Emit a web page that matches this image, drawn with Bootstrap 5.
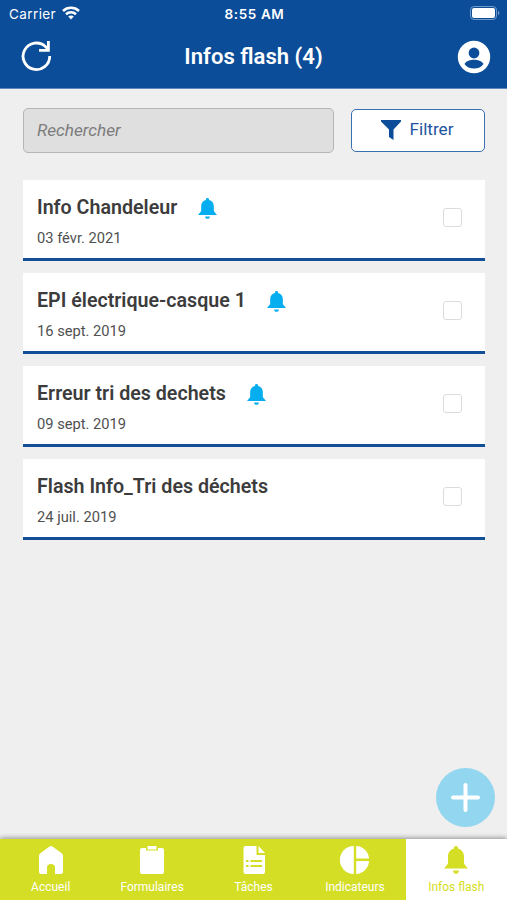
<!DOCTYPE html>
<html lang="fr">
<head>
<meta charset="utf-8">
<meta name="viewport" content="width=device-width, initial-scale=1">
<title>Infos flash</title>
<link href="https://cdn.jsdelivr.net/npm/bootstrap@5.3.0/dist/css/bootstrap.min.css" rel="stylesheet">
<style>
  body { font-family: Roboto, sans-serif; background: #efefef; color: #3c3c3c; height: 900px; overflow: hidden; }
  svg { display: block; flex: none; }
  .app-header { background: #0b4d99; height: 89px; border-bottom: 1px solid #5f8abb; }
  .status-bar { height: 28px; padding: 0 7px 0 9px; font: 13.500px/28px Inter, sans-serif; }
  .status-bar .carrier { letter-spacing: .4px; }
  .status-bar .wifi { margin-left: 6px; margin-top: -2px; }
  .status-bar .battery { margin-top: -2px; }
  .status-bar .clock { font-weight: 600; letter-spacing: .6px; }
  .status-bar .side, .title-bar .side { flex: 1 1 0; }
  .title-bar { height: 58px; padding: 0 16px 0 20px; }
  .title-bar h1 { font-size: 22.100px; font-weight: 600; line-height: 28px; margin: -2px 0 0 -4px; }
  .search-row { padding: 19px 22px 0 23px; gap: 17px; }
  .search-box { height: 45px; background: #dfdfdf; border: 1px solid #b5b5b5; border-radius: 5px; font-size: 17.200px; font-style: italic; padding: 0 13px 2px; }
  .search-box:focus { background: #dfdfdf; }
  .search-box::placeholder { color: #7c7c7c; }
  .filter-btn { width: 134px; height: 43px; background: #fff; border: 1.5px solid #3a70b0; border-radius: 5px; color: #1e559f; font-size: 17.200px; line-height: 20px; padding: 0 1px 1px 0; gap: 8px; }
  .filter-btn span { margin-top: -2px; }
  .flash-list { padding: 27px 22px 0 23px; gap: 12px; }
  .flash-item { height: 81px; border-bottom: 3px solid #134f97; padding: 0 23px 3px 14px; }
  .flash-text { padding-top: 9px; }
  .flash-item h2 { font-size: 19.650px; font-weight: 600; line-height: 24px; }
  .flash-item h2 + svg { margin-left: 21px; margin-top: 1px; }
  .flash-date { font-size: 14.700px; line-height: 20px; margin-top: 8px; color: #505050; }
  .flash-item .form-check-input { width: 19px; height: 19px; border: 1.5px solid #dcdcdc; border-radius: 3px; margin: 0; }
  .add-btn { width: 59px; height: 59px; background: #92d6f0; margin: 0 12px 12px 0; }
  .tab-bar { height: 61px; background: #d4de24; box-shadow: 0 -1px 5px rgba(0,0,0,.4); }
  .tab-bar .nav-link { color: #fff; font-size: 12px; line-height: 14px; padding: 6px 0 0; gap: 5px; border-radius: 0; }
  .tab-bar .nav-link.active { background: #fff; color: #d4de24; }
</style>
</head>
<body class="d-flex flex-column">
<svg width="0" height="0" class="position-absolute">
  <symbol id="bell" viewBox="0 0 24 28" preserveAspectRatio="none"><path d="M12 0c1.200 0 2 .8 2 2v.6c3.800 1 6 4.100 6 8v6.200c0 1.700 1.800 3 4 5.700H0c2.200-2.700 4-4 4-5.700v-6.200c0-3.900 2.200-7 6-8V2c0-1.200.8-2 2-2zM9 24.500h6c0 2-1.300 3.300-3 3.300s-3-1.300-3-3.300z" fill="currentColor"/></symbol>
</svg>

<header class="app-header text-white flex-shrink-0">
  <div class="status-bar d-flex">
    <div class="side d-flex align-items-center"><span class="carrier">Carrier</span>
      <svg class="wifi" width="18" height="14" viewBox="0 0 18 14" fill="none" stroke="#fff" stroke-width="2.500"><path d="M1 5C5.500.8 12.500.8 17 5M4 8.200c2.800-2.500 7.200-2.500 10 0"/><path d="M6.200 10.500c1.600-1.300 4-1.300 5.600 0L9 13.500z" fill="#fff" stroke="none"/></svg>
    </div>
    <span class="clock">8:55 AM</span>
    <div class="side d-flex align-items-center justify-content-end">
      <svg class="battery" width="30" height="14" viewBox="0 0 30 14"><rect x=".5" y=".5" width="26" height="13" rx="3.500" fill="none" stroke="#7199c9"/><rect x="2" y="2" width="23" height="10" rx="2" fill="#fff"/><path d="M28 4.500q3 2.500 0 5z" fill="#7199c9"/></svg>
    </div>
  </div>
  <div class="title-bar d-flex align-items-center">
    <div class="side"><svg width="32" height="34" viewBox="0 0 32 34" fill="none" stroke="#fff" stroke-width="2.800"><path d="M29.700 16A13.300 13.300 0 1 1 25.600 6.700L28.500 9.500"/><path d="M28.400 1v9.400H19"/></svg></div>
    <h1>Infos flash (4)</h1>
    <div class="side d-flex justify-content-end">
      <svg width="34" height="34" viewBox="0 0 34 34"><circle cx="17" cy="17" r="16.200" fill="#fff"/><circle cx="17" cy="13" r="5.400" fill="#0b4d99"/><path d="M7.500 24c1.500-3 6.200-4.200 9.500-4.200s8 1.200 9.500 4.200c-2 3-5.500 4.500-9.500 4.500S9.500 27 7.500 24z" fill="#0b4d99"/></svg>
    </div>
  </div>
</header>

<main class="flex-grow-1 d-flex flex-column">
  <div class="search-row d-flex align-items-center">
    <input class="form-control search-box" type="text" placeholder="Rechercher" aria-label="Rechercher">
    <button class="btn filter-btn flex-shrink-0 d-flex align-items-center justify-content-center" type="button">
      <svg width="20" height="20" viewBox="0 0 20 20"><path d="M0 0h20v1.500L12.500 9.500V20L8 17V9.500L0 1.500z" fill="#0b4d99"/></svg>
      <span>Filtrer</span>
    </button>
  </div>

  <div class="flash-list d-flex flex-column">
    <article class="flash-item bg-white d-flex align-items-center justify-content-between">
      <div class="flash-text"><div class="d-flex align-items-center"><h2 class="mb-0">Info Chandeleur</h2><svg width="19" height="21" color="#06aeef"><use href="#bell"/></svg></div><div class="flash-date">03 févr. 2021</div></div>
      <input class="form-check-input" type="checkbox" aria-label="Info Chandeleur">
    </article>
    <article class="flash-item bg-white d-flex align-items-center justify-content-between">
      <div class="flash-text"><div class="d-flex align-items-center"><h2 class="mb-0">EPI électrique-casque 1</h2><svg width="19" height="21" color="#06aeef"><use href="#bell"/></svg></div><div class="flash-date">16 sept. 2019</div></div>
      <input class="form-check-input" type="checkbox" aria-label="EPI électrique-casque 1">
    </article>
    <article class="flash-item bg-white d-flex align-items-center justify-content-between">
      <div class="flash-text"><div class="d-flex align-items-center"><h2 class="mb-0">Erreur tri des dechets</h2><svg width="19" height="21" color="#06aeef"><use href="#bell"/></svg></div><div class="flash-date">09 sept. 2019</div></div>
      <input class="form-check-input" type="checkbox" aria-label="Erreur tri des dechets">
    </article>
    <article class="flash-item bg-white d-flex align-items-center justify-content-between">
      <div class="flash-text"><div class="d-flex align-items-center"><h2 class="mb-0">Flash Info_Tri des déchets</h2></div><div class="flash-date">24 juil. 2019</div></div>
      <input class="form-check-input" type="checkbox" aria-label="Flash Info_Tri des déchets">
    </article>
  </div>

  <button class="add-btn btn rounded-circle border-0 p-0 mt-auto ms-auto d-flex align-items-center justify-content-center" type="button" aria-label="Ajouter">
    <svg width="29" height="29" viewBox="0 0 29 29" stroke="#fff" stroke-width="4" stroke-linecap="round"><path d="M14.500 2v25M2 14.500h25"/></svg>
  </button>
</main>

<nav class="tab-bar nav nav-fill nav-justified flex-nowrap flex-shrink-0">
  <a class="nav-link d-flex flex-column align-items-center" href="#"><svg width="28" height="30" viewBox="0 0 28 30"><path d="M12.500 1.500q1.500-1 3 0L25 8.500q1 .8 1 2V27q0 2-2 2h-6v-6.500q0-3.500-4-3.500t-4 3.500V29H4q-2 0-2-2V10.500q0-1.200 1-2z" fill="#fff"/></svg><span>Accueil</span></a>
  <a class="nav-link d-flex flex-column align-items-center" href="#"><svg width="28" height="30" viewBox="0 0 28 30"><path d="M4 3h4v2.500h12V3h4q2 0 2 2v22q0 2-2 2H4q-2 0-2-2V5q0-2 2-2z" fill="#fff"/><rect x="9.500" y="1" width="9" height="3.500" fill="#fff"/></svg><span>Formulaires</span></a>
  <a class="nav-link d-flex flex-column align-items-center" href="#"><svg width="28" height="30" viewBox="0 0 28 30"><path d="M5.500 1h11v9h8.500v17q0 2-2 2H5.500q-2 0-2-2V3q0-2 2-2z" fill="#fff"/><path d="M18.500 1l6.500 7h-6.500z" fill="#fff"/><path d="M6 16h2.500m2 0h11.500M6 21h2.500m2 0h11.500" stroke="#d4de24" stroke-width="2"/></svg><span>Tâches</span></a>
  <a class="nav-link d-flex flex-column align-items-center" href="#"><svg width="30" height="30" viewBox="0 0 30 30" fill="#fff"><path d="M13.800 1a14 14 0 0 0 0 28zM16.200 1v12.600H29A13.500 13.500 0 0 0 16.200 1zM16.200 16H29A13.500 13.500 0 0 1 16.200 29z"/></svg><span>Indicateurs</span></a>
  <a class="nav-link active d-flex flex-column align-items-center" href="#"><svg width="26" height="30"><use href="#bell" x="1" y="1" width="24" height="28"/></svg><span>Infos flash</span></a>
</nav>
<script src="https://cdn.jsdelivr.net/npm/bootstrap@5.3.0/dist/js/bootstrap.bundle.min.js"></script>
</body>
</html>
